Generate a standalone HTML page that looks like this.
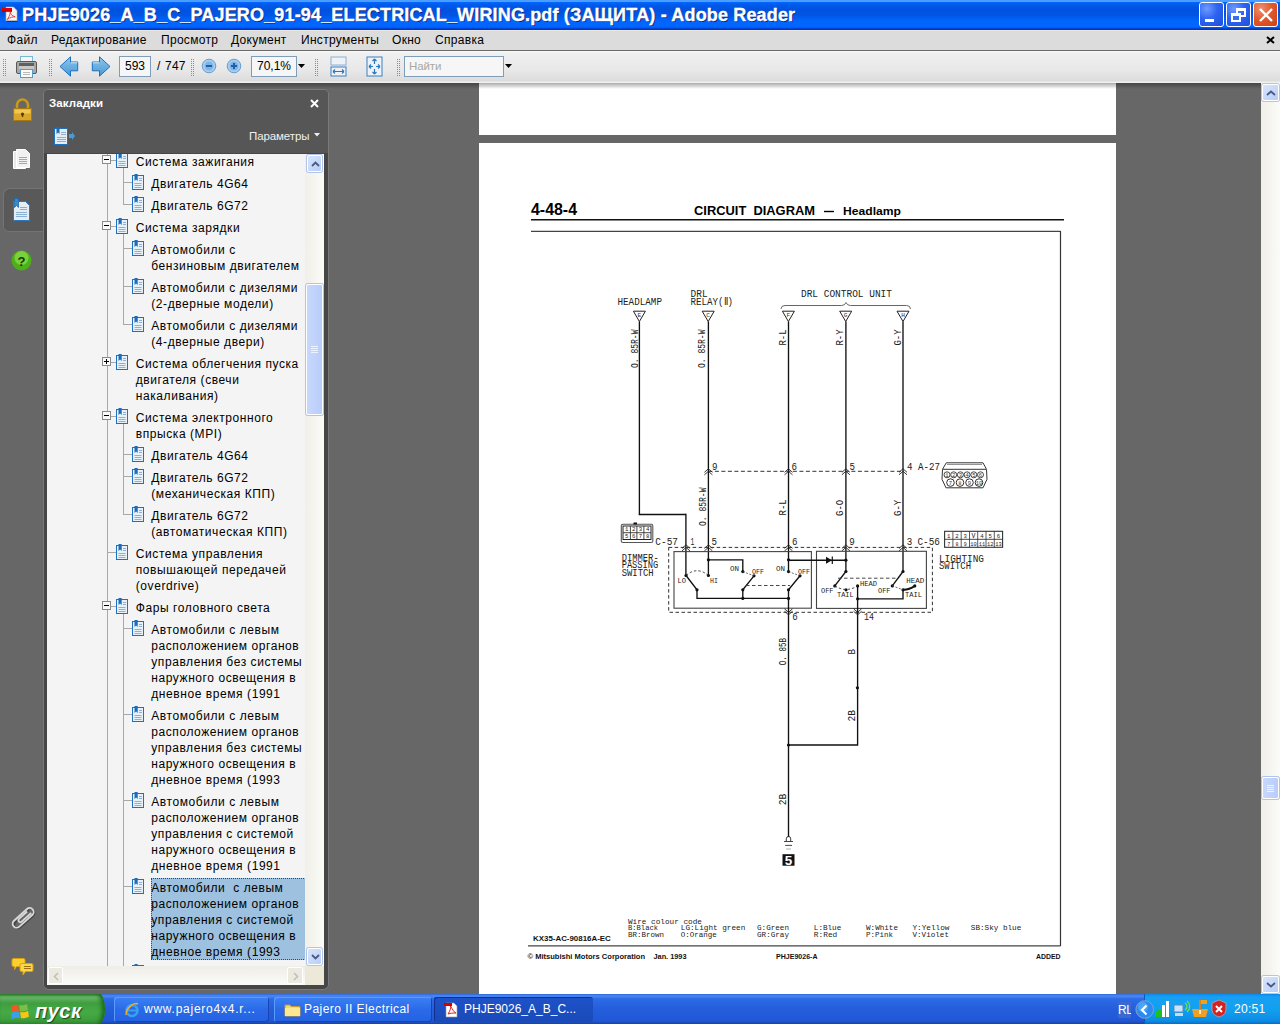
<!DOCTYPE html>
<html><head><meta charset="utf-8">
<style>
*{margin:0;padding:0;box-sizing:border-box}
html,body{width:1280px;height:1024px;overflow:hidden;background:#686868;font-family:"Liberation Sans",sans-serif;position:relative}
.a{position:absolute}
#title{left:0;top:0;width:1280px;height:30px;background:linear-gradient(#4d9cff 0,#4d9cff 1.5px,#0068ff 2.2px,#005ae8 5px,#0052df 10px,#0056e4 15px,#0066ff 21px,#0066ff 27px,#0040d0 28.6px,#0030c0 30px)}
#title .t{left:22px;top:5px;color:#fff;font-weight:bold;font-size:18px;white-space:nowrap;text-shadow:1px 1px 0 #0a1e78;letter-spacing:0.16px;-webkit-text-stroke:0.35px #fff}
.wb{top:2px;width:25px;height:25px;border:1px solid #fff;border-radius:3px;background:radial-gradient(circle at 30% 25%,#6e9cff 0%,#2d64f0 45%,#1f4fd8 100%)}
#menu{left:0;top:30px;width:1280px;height:21px;background:linear-gradient(#ebe7e2 0,#ebe7e2 1px,#dcdcdc 1.5px,#dcdcdc 19.5px,#6a6a6a 20px,#6a6a6a 21px)}
#menu span{position:absolute;top:3px;font-size:12px;color:#000;letter-spacing:0.3px}
#tb{left:0;top:51px;width:1280px;height:32px;background:linear-gradient(#fafafa 0,#f0f0f0 2px,#e8e8e8 60%,#dcdcdc 30px,#f0f0f0 31px)}
.grip{width:3px;height:17px;top:8px;background-image:repeating-linear-gradient(#8c8c8c 0 1px,transparent 1px 2px),repeating-linear-gradient(#8c8c8c 0 1px,transparent 1px 2px);background-size:1px 17px,1px 17px;background-position:0 0,2px 0;background-repeat:no-repeat}
.inp{background:#f6f6f6;border:1px solid #7f9db9;height:21px;font-size:12px;color:#000;line-height:19px;text-align:center}
#main{left:0;top:83px;width:1280px;height:911px;background:#676767;overflow:hidden}
#panel{left:43px;top:6px;width:286px;height:901px;background:#565656;border-radius:5px 5px 6px 6px;box-shadow:inset 0 0 0 1px #7a7a7a}
#pframe{left:1px;top:64px;width:284px;height:836px;background:#464646;border-radius:0 0 5px 5px}
#tree{left:4px;top:65px;width:277px;height:831px;background:#f4f4f4;overflow:hidden;font-size:12px;color:#000}
#tree .tx{line-height:16px;white-space:nowrap;letter-spacing:0.57px}
#tree .tx.sel{background:#9dc1de;outline:1px dotted #6a3a1a;outline-offset:-1px;width:155px;height:82px;padding-top:2px;top:724px !important}
#tree .vl{width:1px;background:#a8a8a8}
#tree .hl{height:1px;background:#a8a8a8}
#tree .ex{width:9px;height:9px;border:1px solid #8a8a8a;background:#fafafa}
#tree .ex i{position:absolute;left:1px;top:3px;width:5px;height:1px;background:#000}
#tree .ex b{position:absolute;left:3px;top:1px;width:1px;height:5px;background:#000}
.sbv{background:linear-gradient(90deg,#f0efe8,#fbfbf8)}
.sbtn{width:16px;height:17px;border:1px solid #fff;border-radius:2px;background:linear-gradient(135deg,#d8e4fc,#b8cef8);box-shadow:0 0 0 1px #b0c4ec}
#task{left:0;top:994px;width:1280px;height:30px;background:linear-gradient(#3168d5 0px,#4a8af5 2px,#2c6ae6 5px,#245edb 50%,#2157d6 90%,#1941a5 100%)}
.tbtn{top:3px;height:25px;border-radius:3px;background:linear-gradient(#3c81f3,#2a6ae8 50%,#2461e0);box-shadow:inset 1px 1px 0 #5a9aff,inset -1px -1px 0 #1a44b0;color:#fff;font-size:12px;line-height:25px;white-space:nowrap;overflow:hidden}
</style></head><body>
<svg width="0" height="0" style="position:absolute">
 <defs>
  <symbol id="bk" viewBox="0 0 13 16"><rect x="0.5" y="1.5" width="11" height="14" fill="#e8f0f8" stroke="#1e70c0"/><path d="M2.5 0h3.2v7l-1.6-1.6-1.6 1.6z" fill="#1e6cb8"/><path d="M7 4.5h3M7 6.5h3M2.5 9.5h7M2.5 11.5h7M2.5 13.5h7" stroke="#8fb0d4" stroke-width="1"/></symbol>
 </defs>
</svg>
<div id="title" class="a">
  <svg class="a" style="left:2px;top:6px" width="17" height="17" viewBox="0 0 17 17"><path d="M4 1h7.5l3.5 3.5V15H4z" fill="#f4f4f4" stroke="#b0b0b0" stroke-width="0.6"/><path d="M4.3 15.3h10.9" stroke="#202040" stroke-width="1"/><rect x="0" y="2" width="10" height="3.5" fill="#e00000"/><rect x="0" y="4.8" width="10" height="0.8" fill="#900000"/><path d="M5 13.5c1.5-1.5 3-4 3.3-7.5 0.4 2 1.5 4 4.8 4.8-2 0-4.5 0.3-8 2.7z" fill="none" stroke="#f03030" stroke-width="0.9"/></svg>
  <div class="a t">PHJE9026_A_B_C_PAJERO_91-94_ELECTRICAL_WIRING.pdf (ЗАЩИТА) - Adobe Reader</div>
  <div class="a wb" style="left:1199px"><div class="a" style="left:5px;top:16px;width:9px;height:3px;background:#fff"></div></div>
  <div class="a wb" style="left:1226px"><div class="a" style="left:9px;top:5px;width:10px;height:9px;border:2px solid #fff;border-top-width:3px"></div><div class="a" style="left:4px;top:10px;width:10px;height:9px;border:2px solid #fff;border-top-width:3px;background:#3a6cf0"></div></div>
  <div class="a wb" style="left:1253px;background:radial-gradient(circle at 30% 25%,#f09070 0%,#e05a30 45%,#d04010 100%)"><svg class="a" style="left:4px;top:4px" width="16" height="16"><path d="M2 2L14 14M14 2L2 14" stroke="#fff" stroke-width="2.4"/></svg></div>
</div>
<div id="menu" class="a">
  <span style="left:7px">Файл</span>
  <span style="left:51px">Редактирование</span>
  <span style="left:161px">Просмотр</span>
  <span style="left:231px">Документ</span>
  <span style="left:301px">Инструменты</span>
  <span style="left:392px">Окно</span>
  <span style="left:435px">Справка</span>
  <svg class="a" style="left:1266px;top:6px" width="9" height="8"><path d="M1 1L8 7M8 1L1 7" stroke="#000" stroke-width="2"/></svg>
</div>
<div id="tb" class="a">
  <div class="a grip" style="left:3px"></div>
  <svg class="a" style="left:16px;top:5px" width="22" height="23" viewBox="0 0 22 23"><rect x="4.5" y="0.5" width="12" height="7" fill="#f6f6f6" stroke="#7ab8d8"/><rect x="0.5" y="5.5" width="20" height="12" rx="1.5" fill="#a8a8a8" stroke="#585858"/><rect x="3" y="7" width="15" height="3" fill="#606060"/><rect x="3" y="10" width="15" height="3" fill="#c8c8c8"/><rect x="4.5" y="13.5" width="12" height="8" fill="#fafafa" stroke="#5a9ac8"/><path d="M7 16.5h7M7 18.5h7" stroke="#b8b8b8"/></svg>
  <div class="a grip" style="left:49px"></div>
  <svg class="a" style="left:59px;top:5px" width="20" height="21" viewBox="0 0 20 21"><defs><linearGradient id="ag" x1="0" y1="0" x2="0" y2="1"><stop offset="0" stop-color="#8cc6ec"/><stop offset="1" stop-color="#4a98d4"/></linearGradient></defs><path d="M1 10.5L11.5 0.8v5.2h7.2v8.8h-7.2v5.4z" fill="url(#ag)" stroke="#1a70c0" stroke-width="1"/><path d="M11.8 6.8h6.5" stroke="#c8e8fc" stroke-width="1"/></svg>
  <svg class="a" style="left:91px;top:5px" width="20" height="21" viewBox="0 0 20 21"><path d="M19 10.5L8.5 0.8v5.2H1.3v8.8h7.2v5.4z" fill="url(#ag)" stroke="#1a70c0" stroke-width="1"/><path d="M1.7 6.8h6.5" stroke="#c8e8fc" stroke-width="1"/></svg>
  <div class="a inp" style="left:119px;top:5px;width:32px">593</div>
  <div class="a" style="left:157px;top:8px;font-size:12px;color:#000;letter-spacing:0.2px;word-spacing:1px">/ 747</div>
  <div class="a grip" style="left:191px"></div>
  <svg class="a" style="left:201px;top:7px" width="16" height="16" viewBox="0 0 16 16"><circle cx="8" cy="8" r="6.8" fill="#a8cdf0" stroke="#6a9cc8"/><circle cx="8" cy="8" r="4.5" fill="#7fb4e6"/><rect x="5" y="7" width="6" height="2" fill="#1f5ea8"/></svg>
  <svg class="a" style="left:226px;top:7px" width="16" height="16" viewBox="0 0 16 16"><circle cx="8" cy="8" r="6.8" fill="#a8cdf0" stroke="#6a9cc8"/><circle cx="8" cy="8" r="4.5" fill="#7fb4e6"/><rect x="5" y="7" width="6" height="2" fill="#1f5ea8"/><rect x="7" y="5" width="2" height="6" fill="#1f5ea8"/></svg>
  <div class="a inp" style="left:251px;top:5px;width:46px">70,1%</div>
  <svg class="a" style="left:298px;top:13px" width="7" height="5"><path d="M0 0h7L3.5 4z" fill="#000"/></svg>
  <div class="a grip" style="left:315px"></div>
  <svg class="a" style="left:330px;top:5px" width="17" height="21" viewBox="0 0 17 21"><rect x="1" y="1" width="15" height="8" fill="#eef2f6" stroke="#8ab0d0"/><rect x="1" y="11" width="15" height="9" fill="#eef2f6" stroke="#3a80c0"/><path d="M3 15.5h11M3 15.5l2-2M3 15.5l2 2M14 15.5l-2-2M14 15.5l-2 2" stroke="#2a78c0" stroke-width="1.2" fill="none"/></svg>
  <svg class="a" style="left:366px;top:5px" width="17" height="21" viewBox="0 0 17 21"><rect x="1" y="1" width="15" height="19" fill="#eef2f6" stroke="#3a80c0"/><path d="M8.5 3v5M8.5 3l-2 2M8.5 3l2 2M8.5 18v-5M8.5 18l-2-2M8.5 18l2-2M3 10.5h4M3 10.5l2-2M3 10.5l2 2M14 10.5h-4M14 10.5l-2-2M14 10.5l-2 2" stroke="#2a78c0" stroke-width="1.2" fill="none"/></svg>
  <div class="a grip" style="left:397px"></div>
  <div class="a inp" style="left:404px;top:5px;width:100px;text-align:left;padding-left:4px;color:#a8a8a0;font-size:11.5px;letter-spacing:-0.1px">Найти</div>
  <svg class="a" style="left:505px;top:13px" width="7" height="5"><path d="M0 0h7L3.5 4z" fill="#000"/></svg>
</div>
<div id="main" class="a">
  <!-- left strip icons -->
  <svg class="a" style="left:12px;top:15px" width="21" height="24" viewBox="0 0 21 24"><path d="M5 11V7a5.5 5.5 0 0 1 11 0v4" fill="none" stroke="#c89a1c" stroke-width="2.6"/><rect x="1.5" y="10.5" width="18" height="12" fill="#d8a628" stroke="#a87a10"/><rect x="2.5" y="11.5" width="16" height="4" fill="#f0c850"/><circle cx="10.5" cy="16" r="1.6" fill="#5a3a00"/><rect x="9.8" y="16" width="1.4" height="3" fill="#5a3a00"/></svg>
  <svg class="a" style="left:12px;top:65px" width="20" height="23" viewBox="0 0 20 23"><path d="M1.5 3.5h12v17h-12z" fill="#e8e8e8" stroke="#fff"/><path d="M4.5 1.5h9l4 4v14h-13z" fill="#f2f2f2" stroke="#fff"/><path d="M7 9.5h8M7 11.5h8M7 13.5h8M7 15.5h8" stroke="#a8a8a8"/></svg>
  <div class="a" style="left:3px;top:105px;width:42px;height:44px;background:#595959;border-radius:6px 0 0 6px;box-shadow:inset 1px 1px 0 #747474,inset 0 -1px 0 #747474"></div>
  <svg class="a" style="left:12px;top:115px" width="20" height="24" viewBox="0 0 20 24"><path d="M1.5 3.5h12l4 4v15h-16z" fill="#e4ecf4" stroke="#2a78c0"/><path d="M2.5 0.5h4v9l-2-2-2 2z" fill="#3a88c8" stroke="#1a68b0" stroke-width="0.8"/><path d="M8 9.5h7M8 11.5h7M4 14.5h11M4 16.5h11M4 18.5h11" stroke="#8ab0d4"/></svg>
  <svg class="a" style="left:11px;top:167px" width="21" height="21" viewBox="0 0 21 21"><circle cx="10.5" cy="10.5" r="10" fill="#4cb018"/><circle cx="10.5" cy="8" r="7" fill="#8ee048" opacity="0.7"/><text x="10.5" y="15.5" font-family="Liberation Sans" font-weight="bold" font-size="13" text-anchor="middle" fill="#103808">?</text></svg>
  <svg class="a" style="left:10px;top:822px" width="26" height="26" viewBox="0 0 26 26"><g transform="translate(13,13) rotate(-42)" fill="none"><path d="M9,-3.2 h-18 a3.6,3.6 0 0 0 0,7.2 h17 a4.3,4.3 0 0 0 0,-8.6" stroke="#303030" stroke-width="2" transform="translate(0.8,1.2)" opacity="0.6"/><path d="M10,4 h-18.5 a4,4 0 0 1 0,-8 h17.5 a4,4 0 0 1 0,8 M9.5,1.8 h-13 a1.9,1.9 0 0 1 0,-3.8 h11" stroke="#d8d8d8" stroke-width="1.8"/></g></svg>
  <svg class="a" style="left:11px;top:874px" width="24" height="20" viewBox="0 0 24 20"><path d="M2.5 1.5h10a1.5 1.5 0 0 1 1.5 1.5v5a1.5 1.5 0 0 1-1.5 1.5h-7l-2 3v-3h-1a1.5 1.5 0 0 1-1.5-1.5v-5a1.5 1.5 0 0 1 1.5-1.5z" fill="#f8d030" stroke="#d8a010"/><path d="M10.5 6.5h10a1.5 1.5 0 0 1 1.5 1.5v5a1.5 1.5 0 0 1-1.5 1.5h-6l-2.5 3.5v-3.5h-1.5a1.5 1.5 0 0 1-1.5-1.5v-5a1.5 1.5 0 0 1 1.5-1.5z" fill="#fad840" stroke="#d8a010"/><path d="M13 9.5h7M13 11.5h7" stroke="#a07010"/></svg>
  <!-- panel -->
  <div id="panel" class="a">
    <div class="a" style="left:6px;top:8px;color:#fff;font-weight:bold;font-size:11.5px;letter-spacing:0.1px">Закладки</div>
    <svg class="a" style="left:267px;top:10px" width="9" height="9"><path d="M1 1L8 8M8 1L1 8" stroke="#fff" stroke-width="2"/></svg>
    <svg class="a" style="left:11px;top:38px" width="22" height="18" viewBox="0 0 22 18"><rect x="0.5" y="1.5" width="13" height="16" fill="#e4ecf4" stroke="#1e70c0"/><path d="M2.5 0h3v7l-1.5-1.5L2.5 7z" fill="#1e6cb8"/><path d="M7 5.5h5M7 7.5h5M3 10.5h9M3 12.5h9M3 14.5h9" stroke="#8fb0d4"/><path d="M15 7h3V5l3 4-3 4v-2h-3z" fill="#4a9ad8"/></svg>
    <div class="a" style="left:206px;top:41px;color:#f0f0f0;font-size:11.5px;letter-spacing:-0.1px">Параметры</div>
    <svg class="a" style="left:271px;top:44px" width="7" height="4"><path d="M0 0h6L3 3.5z" fill="#f0f0f0"/></svg>
    <div id="pframe" class="a"></div>
    <div id="tree" class="a">
<div class="a vl" style="left:60px;top:0px;height:812px"></div>
<div class="a vl" style="left:76px;top:14px;height:37px"></div>
<div class="a vl" style="left:76px;top:80px;height:91px"></div>
<div class="a vl" style="left:76px;top:270px;height:91px"></div>
<div class="a vl" style="left:76px;top:460px;height:352px"></div>
<div class="a hl" style="left:61px;top:6px;width:8px"></div>
<div class="a ex" style="left:55px;top:1px"><i></i></div>
<svg class="a" style="left:69px;top:-2px" width="13" height="16"><use href="#bk"/></svg>
<div class="a tx" style="left:88.8px;top:0px">Система зажигания</div>
<div class="a hl" style="left:77px;top:28px;width:8px"></div>
<svg class="a" style="left:85px;top:20px" width="13" height="16"><use href="#bk"/></svg>
<div class="a tx" style="left:104.3px;top:22px">Двигатель 4G64</div>
<div class="a hl" style="left:77px;top:50px;width:8px"></div>
<svg class="a" style="left:85px;top:42px" width="13" height="16"><use href="#bk"/></svg>
<div class="a tx" style="left:104.3px;top:44px">Двигатель 6G72</div>
<div class="a hl" style="left:61px;top:72px;width:8px"></div>
<div class="a ex" style="left:55px;top:67px"><i></i></div>
<svg class="a" style="left:69px;top:64px" width="13" height="16"><use href="#bk"/></svg>
<div class="a tx" style="left:88.8px;top:66px">Система зарядки</div>
<div class="a hl" style="left:77px;top:94px;width:8px"></div>
<svg class="a" style="left:85px;top:86px" width="13" height="16"><use href="#bk"/></svg>
<div class="a tx" style="left:104.3px;top:88px">Автомобили с<br>бензиновым двигателем</div>
<div class="a hl" style="left:77px;top:132px;width:8px"></div>
<svg class="a" style="left:85px;top:124px" width="13" height="16"><use href="#bk"/></svg>
<div class="a tx" style="left:104.3px;top:126px">Автомобили с дизелями<br>(2-дверные модели)</div>
<div class="a hl" style="left:77px;top:170px;width:8px"></div>
<svg class="a" style="left:85px;top:162px" width="13" height="16"><use href="#bk"/></svg>
<div class="a tx" style="left:104.3px;top:164px">Автомобили с дизелями<br>(4-дверные двери)</div>
<div class="a hl" style="left:61px;top:208px;width:8px"></div>
<div class="a ex" style="left:55px;top:203px"><i></i><b></b></div>
<svg class="a" style="left:69px;top:200px" width="13" height="16"><use href="#bk"/></svg>
<div class="a tx" style="left:88.8px;top:202px">Система облегчения пуска<br>двигателя (свечи<br>накаливания)</div>
<div class="a hl" style="left:61px;top:262px;width:8px"></div>
<div class="a ex" style="left:55px;top:257px"><i></i></div>
<svg class="a" style="left:69px;top:254px" width="13" height="16"><use href="#bk"/></svg>
<div class="a tx" style="left:88.8px;top:256px">Система электронного<br>впрыска (MPI)</div>
<div class="a hl" style="left:77px;top:300px;width:8px"></div>
<svg class="a" style="left:85px;top:292px" width="13" height="16"><use href="#bk"/></svg>
<div class="a tx" style="left:104.3px;top:294px">Двигатель 4G64</div>
<div class="a hl" style="left:77px;top:322px;width:8px"></div>
<svg class="a" style="left:85px;top:314px" width="13" height="16"><use href="#bk"/></svg>
<div class="a tx" style="left:104.3px;top:316px">Двигатель 6G72<br>(механическая КПП)</div>
<div class="a hl" style="left:77px;top:360px;width:8px"></div>
<svg class="a" style="left:85px;top:352px" width="13" height="16"><use href="#bk"/></svg>
<div class="a tx" style="left:104.3px;top:354px">Двигатель 6G72<br>(автоматическая КПП)</div>
<div class="a hl" style="left:61px;top:398px;width:8px"></div>
<svg class="a" style="left:69px;top:390px" width="13" height="16"><use href="#bk"/></svg>
<div class="a tx" style="left:88.8px;top:392px">Система управления<br>повышающей передачей<br>(overdrive)</div>
<div class="a hl" style="left:61px;top:452px;width:8px"></div>
<div class="a ex" style="left:55px;top:447px"><i></i></div>
<svg class="a" style="left:69px;top:444px" width="13" height="16"><use href="#bk"/></svg>
<div class="a tx" style="left:88.8px;top:446px">Фары головного света</div>
<div class="a hl" style="left:77px;top:474px;width:8px"></div>
<svg class="a" style="left:85px;top:466px" width="13" height="16"><use href="#bk"/></svg>
<div class="a tx" style="left:104.3px;top:468px">Автомобили с левым<br>расположением органов<br>управления без системы<br>наружного освещения в<br>дневное время (1991</div>
<div class="a hl" style="left:77px;top:560px;width:8px"></div>
<svg class="a" style="left:85px;top:552px" width="13" height="16"><use href="#bk"/></svg>
<div class="a tx" style="left:104.3px;top:554px">Автомобили с левым<br>расположением органов<br>управления без системы<br>наружного освещения в<br>дневное время (1993</div>
<div class="a hl" style="left:77px;top:646px;width:8px"></div>
<svg class="a" style="left:85px;top:638px" width="13" height="16"><use href="#bk"/></svg>
<div class="a tx" style="left:104.3px;top:640px">Автомобили с левым<br>расположением органов<br>управления с системой<br>наружного освещения в<br>дневное время (1991</div>
<div class="a hl" style="left:77px;top:732px;width:8px"></div>
<svg class="a" style="left:85px;top:724px" width="13" height="16"><use href="#bk"/></svg>
<div class="a tx sel" style="left:104.3px;top:726px">Автомобили&nbsp; с левым<br>расположением органов<br>управления с системой<br>наружного освещения в<br>дневное время (1993</div>
<div class="a hl" style="left:77px;top:818px;width:8px"></div>
<svg class="a" style="left:85px;top:810px" width="13" height="16"><use href="#bk"/></svg>
    </div>
    <!-- tree v scrollbar -->
    <div class="a sbv" style="left:262px;top:65px;width:19px;height:812px"></div>
    <div class="a sbtn" style="left:264px;top:66px;width:15px;height:17px"><svg class="a" style="left:3px;top:5px" width="9" height="6"><path d="M1 5L4.5 1.5L8 5" stroke="#4a5a80" stroke-width="1.8" fill="none"/></svg></div>
    <div class="a sbtn" style="left:263px;top:195px;width:17px;height:131px;background:linear-gradient(90deg,#c8d8fc,#b8cdfa)"><svg class="a" style="left:4px;top:61px" width="8" height="7"><path d="M0 0.5h7M0 2.5h7M0 4.5h7M0 6.5h7" stroke="#eef4ff"/></svg></div>
    <div class="a sbtn" style="left:264px;top:859px;width:15px;height:17px"><svg class="a" style="left:3px;top:5px" width="9" height="6"><path d="M1 1L4.5 4.5L8 1" stroke="#4a5a80" stroke-width="1.8" fill="none"/></svg></div>
    <!-- tree h scrollbar -->
    <div class="a" style="left:4px;top:877px;width:277px;height:19px;background:linear-gradient(#eeede6,#fbfbf8)"></div>
    <div class="a" style="left:5px;top:878px;width:15px;height:17px;border:1px solid #fff;background:#eceae0;border-radius:2px"><svg class="a" style="left:4px;top:4px" width="6" height="9"><path d="M5 1L1.5 4.5L5 8" stroke="#c0c0b8" stroke-width="1.6" fill="none"/></svg></div>
    <div class="a" style="left:244px;top:878px;width:16px;height:17px;border:1px solid #fff;background:#eceae0;border-radius:2px"><svg class="a" style="left:5px;top:4px" width="6" height="9"><path d="M1 1L4.5 4.5L1 8" stroke="#c0c0b8" stroke-width="1.6" fill="none"/></svg></div>
    <div class="a" style="left:262px;top:877px;width:19px;height:19px;background:#ece9d8"></div>
  </div>
  <!-- pages -->
  <div class="a" style="left:479px;top:0;width:637px;height:52px;background:#fff"></div>
  <div class="a" style="left:479px;top:60px;width:637px;height:860px;background:#fff">
<svg class="a" style="left:0;top:0" width="637" height="851" viewBox="479 143 637 851" font-family="Liberation Sans, sans-serif">
<text x="531.0" y="215.0" font-size="16.5" fill="#000" textLength="46.0" lengthAdjust="spacingAndGlyphs" font-weight="bold">4-48-4</text>
<text x="694.0" y="215.0" font-size="13.6" fill="#000" textLength="121.0" lengthAdjust="spacingAndGlyphs" font-weight="bold">CIRCUIT&#160; DIAGRAM</text>
<line x1="824.0" y1="211.5" x2="834.0" y2="211.5" stroke="#000" stroke-width="1.40"/>
<text x="843.0" y="215.0" font-size="11.8" fill="#000" textLength="58.0" lengthAdjust="spacingAndGlyphs" font-weight="bold">Headlamp</text>
<line x1="531.0" y1="219.8" x2="1064.0" y2="219.8" stroke="#111" stroke-width="1.60"/>
<line x1="531.0" y1="231.3" x2="1060.5" y2="231.3" stroke="#444" stroke-width="1.20"/>
<line x1="1060.5" y1="231.0" x2="1060.5" y2="946.0" stroke="#333" stroke-width="1.20"/>
<line x1="528.0" y1="945.8" x2="1060.5" y2="945.8" stroke="#444" stroke-width="1.20"/>
<text x="617.5" y="305.0" font-size="11.4" fill="#222" textLength="44.5" lengthAdjust="spacingAndGlyphs" font-family="Liberation Mono, monospace">HEADLAMP</text>
<text x="690.6" y="297.0" font-size="11.4" fill="#222" textLength="17.0" lengthAdjust="spacingAndGlyphs" font-family="Liberation Mono, monospace">DRL</text>
<text x="690.6" y="305.0" font-size="11.4" fill="#222" textLength="42.5" lengthAdjust="spacingAndGlyphs" font-family="Liberation Mono, monospace">RELAY(&#8545;)</text>
<text x="801.0" y="297.0" font-size="11.4" fill="#222" textLength="91.0" lengthAdjust="spacingAndGlyphs" font-family="Liberation Mono, monospace">DRL CONTROL UNIT</text>
<path d="M781,309 q0,-3.5 4,-3.5 h56.5 q3.5,0 4.5,-3 q1,3 4.5,3 h56 q4,0 4,3.5" fill="none" stroke="#666" stroke-width="1"/>
<path d="M633.4,311.2 h12 l-6,10.3 z" fill="#fff" stroke="#222" stroke-width="1"/>
<text x="639.4" y="317.2" font-size="6.2" fill="#333" text-anchor="middle" font-family="Liberation Mono, monospace">E</text>
<path d="M702.2,311.2 h12 l-6,10.3 z" fill="#fff" stroke="#222" stroke-width="1"/>
<text x="708.2" y="317.2" font-size="6.2" fill="#333" text-anchor="middle" font-family="Liberation Mono, monospace">C</text>
<path d="M782.4,311.2 h12 l-6,10.3 z" fill="#fff" stroke="#222" stroke-width="1"/>
<text x="788.4" y="317.2" font-size="6.2" fill="#333" text-anchor="middle" font-family="Liberation Mono, monospace">F</text>
<path d="M839.7,311.2 h12 l-6,10.3 z" fill="#fff" stroke="#222" stroke-width="1"/>
<text x="845.7" y="317.2" font-size="6.2" fill="#333" text-anchor="middle" font-family="Liberation Mono, monospace">G</text>
<path d="M897.0,311.2 h12 l-6,10.3 z" fill="#fff" stroke="#222" stroke-width="1"/>
<text x="903.0" y="317.2" font-size="6.2" fill="#333" text-anchor="middle" font-family="Liberation Mono, monospace">H</text>
<line x1="639.4" y1="321.5" x2="639.4" y2="514.5" stroke="#111" stroke-width="1.35"/>
<line x1="638.7" y1="514.5" x2="686.0" y2="514.5" stroke="#111" stroke-width="1.35"/>
<line x1="685.9" y1="513.8" x2="685.9" y2="575.5" stroke="#111" stroke-width="1.35"/>
<line x1="708.4" y1="321.5" x2="708.4" y2="575.5" stroke="#111" stroke-width="1.35"/>
<line x1="788.5" y1="321.5" x2="788.5" y2="571.6" stroke="#111" stroke-width="1.35"/>
<line x1="845.9" y1="321.5" x2="845.9" y2="571.5" stroke="#111" stroke-width="1.35"/>
<line x1="903.0" y1="321.5" x2="903.0" y2="571.5" stroke="#111" stroke-width="1.35"/>
<line x1="708.4" y1="471.3" x2="903.0" y2="471.3" stroke="#333" stroke-width="1.00" stroke-dasharray="4,2.5"/>
<path d="M704.4,472.3 l4,-3.5 l4,3.5 M704.4,474.8 l4,-3.5 l4,3.5" fill="none" stroke="#222" stroke-width="0.9"/>
<path d="M784.5,472.3 l4,-3.5 l4,3.5 M784.5,474.8 l4,-3.5 l4,3.5" fill="none" stroke="#222" stroke-width="0.9"/>
<path d="M841.9,472.3 l4,-3.5 l4,3.5 M841.9,474.8 l4,-3.5 l4,3.5" fill="none" stroke="#222" stroke-width="0.9"/>
<path d="M899.0,472.3 l4,-3.5 l4,3.5 M899.0,474.8 l4,-3.5 l4,3.5" fill="none" stroke="#222" stroke-width="0.9"/>
<text x="712.0" y="469.6" font-size="10.5" fill="#222" textLength="5.5" lengthAdjust="spacingAndGlyphs" font-family="Liberation Mono, monospace">9</text>
<text x="791.5" y="469.6" font-size="10.5" fill="#222" textLength="5.5" lengthAdjust="spacingAndGlyphs" font-family="Liberation Mono, monospace">6</text>
<text x="849.5" y="469.6" font-size="10.5" fill="#222" textLength="5.5" lengthAdjust="spacingAndGlyphs" font-family="Liberation Mono, monospace">5</text>
<text x="907.0" y="469.8" font-size="10.5" fill="#222" textLength="33.0" lengthAdjust="spacingAndGlyphs" font-family="Liberation Mono, monospace">4 A-27</text>
<text transform="translate(637.6,368.0) rotate(-90)" font-size="11.4" fill="#222" textLength="38.5" lengthAdjust="spacingAndGlyphs" font-family="Liberation Mono, monospace">O. 85R-W</text>
<text transform="translate(705.4,368.0) rotate(-90)" font-size="11.4" fill="#222" textLength="38.5" lengthAdjust="spacingAndGlyphs" font-family="Liberation Mono, monospace">O. 85R-W</text>
<text transform="translate(786.0,345.6) rotate(-90)" font-size="11.4" fill="#222" textLength="16.2" lengthAdjust="spacingAndGlyphs" font-family="Liberation Mono, monospace">R-L</text>
<text transform="translate(843.2,345.6) rotate(-90)" font-size="11.4" fill="#222" textLength="16.2" lengthAdjust="spacingAndGlyphs" font-family="Liberation Mono, monospace">R-Y</text>
<text transform="translate(901.0,345.6) rotate(-90)" font-size="11.4" fill="#222" textLength="16.2" lengthAdjust="spacingAndGlyphs" font-family="Liberation Mono, monospace">G-Y</text>
<text transform="translate(706.2,526.0) rotate(-90)" font-size="11.4" fill="#222" textLength="38.5" lengthAdjust="spacingAndGlyphs" font-family="Liberation Mono, monospace">O. 85R-W</text>
<text transform="translate(786.2,515.5) rotate(-90)" font-size="11.4" fill="#222" textLength="16.2" lengthAdjust="spacingAndGlyphs" font-family="Liberation Mono, monospace">R-L</text>
<text transform="translate(843.4,516.0) rotate(-90)" font-size="11.4" fill="#222" textLength="16.2" lengthAdjust="spacingAndGlyphs" font-family="Liberation Mono, monospace">G-O</text>
<text transform="translate(900.6,516.0) rotate(-90)" font-size="11.4" fill="#222" textLength="16.2" lengthAdjust="spacingAndGlyphs" font-family="Liberation Mono, monospace">G-Y</text>
<text transform="translate(786.2,665.2) rotate(-90)" font-size="11.4" fill="#222" textLength="27.2" lengthAdjust="spacingAndGlyphs" font-family="Liberation Mono, monospace">O. 85B</text>
<text transform="translate(855.2,654.5) rotate(-90)" font-size="11.4" fill="#222" textLength="5.5" lengthAdjust="spacingAndGlyphs" font-family="Liberation Mono, monospace">B</text>
<text transform="translate(855.2,721.5) rotate(-90)" font-size="11.4" fill="#222" textLength="11.5" lengthAdjust="spacingAndGlyphs" font-family="Liberation Mono, monospace">2B</text>
<text transform="translate(786.2,805.3) rotate(-90)" font-size="11.4" fill="#222" textLength="11.5" lengthAdjust="spacingAndGlyphs" font-family="Liberation Mono, monospace">2B</text>
<path d="M946.3,462.8 h36.7 l3.5,6.5 l0.5,10 l-4,8.5 h-37 l-4,-8.5 l0.5,-10 z" fill="#fff" stroke="#333" stroke-width="1"/>
<line x1="943.0" y1="469.3" x2="986.0" y2="469.3" stroke="#333" stroke-width="1.00"/>
<line x1="947.0" y1="464.5" x2="982.0" y2="464.5" stroke="#777" stroke-width="0.80"/>
<circle cx="947.0" cy="474.8" r="3" fill="#fff" stroke="#333" stroke-width="0.9"/>
<text x="947.0" y="476.8" font-size="5.5" fill="#333" text-anchor="middle" font-family="Liberation Mono, monospace">1</text>
<circle cx="953.7" cy="474.8" r="3" fill="#fff" stroke="#333" stroke-width="0.9"/>
<text x="953.7" y="476.8" font-size="5.5" fill="#333" text-anchor="middle" font-family="Liberation Mono, monospace">2</text>
<circle cx="960.4" cy="474.8" r="3" fill="#fff" stroke="#333" stroke-width="0.9"/>
<text x="960.4" y="476.8" font-size="5.5" fill="#333" text-anchor="middle" font-family="Liberation Mono, monospace">3</text>
<circle cx="967.1" cy="474.8" r="3" fill="#fff" stroke="#333" stroke-width="0.9"/>
<text x="967.1" y="476.8" font-size="5.5" fill="#333" text-anchor="middle" font-family="Liberation Mono, monospace">4</text>
<circle cx="973.8" cy="474.8" r="3" fill="#fff" stroke="#333" stroke-width="0.9"/>
<text x="973.8" y="476.8" font-size="5.5" fill="#333" text-anchor="middle" font-family="Liberation Mono, monospace">5</text>
<circle cx="980.5" cy="474.8" r="3" fill="#fff" stroke="#333" stroke-width="0.9"/>
<text x="980.5" y="476.8" font-size="5.5" fill="#333" text-anchor="middle" font-family="Liberation Mono, monospace">6</text>
<circle cx="950.5" cy="482.6" r="3.8" fill="#fff" stroke="#333" stroke-width="1"/>
<text x="950.5" y="484.6" font-size="5.5" fill="#333" text-anchor="middle" font-family="Liberation Mono, monospace">7</text>
<circle cx="960.0" cy="482.6" r="3.8" fill="#fff" stroke="#333" stroke-width="1"/>
<text x="960.0" y="484.6" font-size="5.5" fill="#333" text-anchor="middle" font-family="Liberation Mono, monospace">8</text>
<circle cx="969.5" cy="482.6" r="3.8" fill="#fff" stroke="#333" stroke-width="1"/>
<text x="969.5" y="484.6" font-size="5.5" fill="#333" text-anchor="middle" font-family="Liberation Mono, monospace">9</text>
<circle cx="979.0" cy="482.6" r="3.8" fill="#fff" stroke="#333" stroke-width="1"/>
<text x="979.0" y="484.6" font-size="5.5" fill="#333" text-anchor="middle" font-family="Liberation Mono, monospace">10</text>
<rect x="621.3" y="524.2" width="31.5" height="18.3" rx="1.5" fill="#fff" stroke="#555" stroke-width="1.1"/>
<rect x="623" y="526" width="28" height="13.5" fill="#fff" stroke="#222" stroke-width="1"/>
<rect x="633.5" y="522.5" width="3.5" height="2" fill="#111"/>
<line x1="630.4" y1="526.0" x2="630.4" y2="539.5" stroke="#333" stroke-width="0.90"/>
<line x1="636.9" y1="526.0" x2="636.9" y2="539.5" stroke="#333" stroke-width="0.90"/>
<line x1="643.9" y1="526.0" x2="643.9" y2="539.5" stroke="#333" stroke-width="0.90"/>
<line x1="623.0" y1="532.7" x2="651.0" y2="532.7" stroke="#333" stroke-width="0.90"/>
<text x="626.7" y="531.3" font-size="5.7" fill="#222" text-anchor="middle" font-family="Liberation Mono, monospace">1</text>
<text x="626.7" y="538.3" font-size="5.7" fill="#222" text-anchor="middle" font-family="Liberation Mono, monospace">5</text>
<text x="633.6" y="531.3" font-size="5.7" fill="#222" text-anchor="middle" font-family="Liberation Mono, monospace">2</text>
<text x="633.6" y="538.3" font-size="5.7" fill="#222" text-anchor="middle" font-family="Liberation Mono, monospace">6</text>
<text x="640.4" y="531.3" font-size="5.7" fill="#222" text-anchor="middle" font-family="Liberation Mono, monospace">3</text>
<text x="640.4" y="538.3" font-size="5.7" fill="#222" text-anchor="middle" font-family="Liberation Mono, monospace">7</text>
<text x="647.7" y="531.3" font-size="5.7" fill="#222" text-anchor="middle" font-family="Liberation Mono, monospace">4</text>
<text x="647.7" y="538.3" font-size="5.7" fill="#222" text-anchor="middle" font-family="Liberation Mono, monospace">8</text>
<rect x="944.6" y="531.3" width="58" height="16" fill="#fff" stroke="#333" stroke-width="1.1"/>
<line x1="944.6" y1="539.3" x2="1002.6" y2="539.3" stroke="#333" stroke-width="0.90"/>
<line x1="952.9" y1="531.3" x2="952.9" y2="547.3" stroke="#333" stroke-width="0.80"/>
<line x1="961.2" y1="531.3" x2="961.2" y2="547.3" stroke="#333" stroke-width="0.80"/>
<line x1="969.5" y1="531.3" x2="969.5" y2="547.3" stroke="#333" stroke-width="0.80"/>
<line x1="977.7" y1="531.3" x2="977.7" y2="547.3" stroke="#333" stroke-width="0.80"/>
<line x1="986.0" y1="531.3" x2="986.0" y2="547.3" stroke="#333" stroke-width="0.80"/>
<line x1="994.3" y1="531.3" x2="994.3" y2="547.3" stroke="#333" stroke-width="0.80"/>
<text x="948.7" y="538.0" font-size="5.7" fill="#222" text-anchor="middle" font-family="Liberation Mono, monospace">1</text>
<text x="957.0" y="538.0" font-size="5.7" fill="#222" text-anchor="middle" font-family="Liberation Mono, monospace">2</text>
<text x="965.3" y="538.0" font-size="5.7" fill="#222" text-anchor="middle" font-family="Liberation Mono, monospace">3</text>
<text x="973.6" y="538.0" font-size="6.6" fill="#222" text-anchor="middle" font-family="Liberation Mono, monospace">V</text>
<text x="981.9" y="538.0" font-size="5.7" fill="#222" text-anchor="middle" font-family="Liberation Mono, monospace">4</text>
<text x="990.2" y="538.0" font-size="5.7" fill="#222" text-anchor="middle" font-family="Liberation Mono, monospace">5</text>
<text x="998.5" y="538.0" font-size="5.7" fill="#222" text-anchor="middle" font-family="Liberation Mono, monospace">6</text>
<text x="948.7" y="545.8" font-size="5.7" fill="#222" text-anchor="middle" textLength="3.0" lengthAdjust="spacingAndGlyphs" font-family="Liberation Mono, monospace">7</text>
<text x="957.0" y="545.8" font-size="5.7" fill="#222" text-anchor="middle" textLength="3.0" lengthAdjust="spacingAndGlyphs" font-family="Liberation Mono, monospace">8</text>
<text x="965.3" y="545.8" font-size="5.7" fill="#222" text-anchor="middle" textLength="3.0" lengthAdjust="spacingAndGlyphs" font-family="Liberation Mono, monospace">9</text>
<text x="973.6" y="545.8" font-size="5.7" fill="#222" text-anchor="middle" textLength="6.5" lengthAdjust="spacingAndGlyphs" font-family="Liberation Mono, monospace">10</text>
<text x="981.9" y="545.8" font-size="5.7" fill="#222" text-anchor="middle" textLength="6.5" lengthAdjust="spacingAndGlyphs" font-family="Liberation Mono, monospace">11</text>
<text x="990.2" y="545.8" font-size="5.7" fill="#222" text-anchor="middle" textLength="6.5" lengthAdjust="spacingAndGlyphs" font-family="Liberation Mono, monospace">12</text>
<text x="998.5" y="545.8" font-size="5.7" fill="#222" text-anchor="middle" textLength="6.5" lengthAdjust="spacingAndGlyphs" font-family="Liberation Mono, monospace">13</text>
<text x="655.3" y="544.6" font-size="10.5" fill="#222" textLength="22.7" lengthAdjust="spacingAndGlyphs" font-family="Liberation Mono, monospace">C-57</text>
<text x="690.5" y="545.0" font-size="10.5" fill="#222" textLength="3.8" lengthAdjust="spacingAndGlyphs" font-family="Liberation Mono, monospace">1</text>
<text x="711.6" y="545.0" font-size="10.5" fill="#222" textLength="5.5" lengthAdjust="spacingAndGlyphs" font-family="Liberation Mono, monospace">5</text>
<text x="792.0" y="545.4" font-size="10.5" fill="#222" textLength="5.5" lengthAdjust="spacingAndGlyphs" font-family="Liberation Mono, monospace">6</text>
<text x="849.2" y="545.4" font-size="10.5" fill="#222" textLength="5.5" lengthAdjust="spacingAndGlyphs" font-family="Liberation Mono, monospace">9</text>
<text x="906.7" y="545.4" font-size="10.5" fill="#222" textLength="5.5" lengthAdjust="spacingAndGlyphs" font-family="Liberation Mono, monospace">3</text>
<text x="917.5" y="545.4" font-size="10.5" fill="#222" textLength="22.5" lengthAdjust="spacingAndGlyphs" font-family="Liberation Mono, monospace">C-56</text>
<text x="621.7" y="560.8" font-size="11.4" fill="#222" textLength="37.0" lengthAdjust="spacingAndGlyphs" font-family="Liberation Mono, monospace">DIMMER-</text>
<text x="621.7" y="568.3" font-size="11.4" fill="#222" textLength="36.5" lengthAdjust="spacingAndGlyphs" font-family="Liberation Mono, monospace">PASSING</text>
<text x="621.7" y="575.8" font-size="11.4" fill="#222" textLength="32.0" lengthAdjust="spacingAndGlyphs" font-family="Liberation Mono, monospace">SWITCH</text>
<text x="939.0" y="561.5" font-size="11.4" fill="#222" textLength="45.0" lengthAdjust="spacingAndGlyphs" font-family="Liberation Mono, monospace">LIGHTING</text>
<text x="939.0" y="568.8" font-size="11.4" fill="#222" textLength="32.0" lengthAdjust="spacingAndGlyphs" font-family="Liberation Mono, monospace">SWITCH</text>
<rect x="668.7" y="547.4" width="263.7" height="64.9" fill="none" stroke="#333" stroke-width="1" stroke-dasharray="3.5,2.5"/>
<path d="M682.0,548.4 l4,-3.5 l4,3.5 M682.0,550.9 l4,-3.5 l4,3.5" fill="none" stroke="#222" stroke-width="0.9"/>
<path d="M704.4,548.4 l4,-3.5 l4,3.5 M704.4,550.9 l4,-3.5 l4,3.5" fill="none" stroke="#222" stroke-width="0.9"/>
<path d="M784.5,548.4 l4,-3.5 l4,3.5 M784.5,550.9 l4,-3.5 l4,3.5" fill="none" stroke="#222" stroke-width="0.9"/>
<path d="M841.9,548.4 l4,-3.5 l4,3.5 M841.9,550.9 l4,-3.5 l4,3.5" fill="none" stroke="#222" stroke-width="0.9"/>
<path d="M899.0,548.4 l4,-3.5 l4,3.5 M899.0,550.9 l4,-3.5 l4,3.5" fill="none" stroke="#222" stroke-width="0.9"/>
<rect x="674" y="551.6" width="137.4" height="56.6" fill="none" stroke="#444" stroke-width="1.1"/>
<rect x="816.5" y="551.3" width="109.9" height="57.1" fill="none" stroke="#444" stroke-width="1.1"/>
<polyline points="708.4,559.8 742.8,559.8 742.8,571.6" fill="none" stroke="#111" stroke-width="1.35"/>
<circle cx="708.4" cy="559.8" r="1.6" fill="#111"/>
<circle cx="686.0" cy="575.5" r="1.6" fill="#111"/>
<circle cx="708.4" cy="575.5" r="1.6" fill="#111"/>
<path d="M686,575.5 Q697,566 708.4,575.5" fill="none" stroke="#333" stroke-width="0.9" stroke-dasharray="2.5,2"/>
<polyline points="686.0,575.5 697.0,589.8 697.0,598.4 788.5,598.4" fill="none" stroke="#111" stroke-width="1.35"/>
<circle cx="697.0" cy="589.8" r="1.6" fill="#111"/>
<circle cx="742.8" cy="571.6" r="1.6" fill="#111"/>
<circle cx="754.0" cy="575.8" r="1.6" fill="#111"/>
<circle cx="742.8" cy="589.8" r="1.6" fill="#111"/>
<circle cx="742.8" cy="598.4" r="1.6" fill="#111"/>
<line x1="742.8" y1="571.6" x2="754.0" y2="575.8" stroke="#444" stroke-width="0.80" stroke-dasharray="2,1.5"/>
<polyline points="754.0,575.8 742.8,589.8 742.8,598.4" fill="none" stroke="#111" stroke-width="1.35"/>
<line x1="746.0" y1="585.5" x2="790.0" y2="585.5" stroke="#333" stroke-width="0.90" stroke-dasharray="3.5,2.5"/>
<circle cx="788.5" cy="559.8" r="1.6" fill="#111"/>
<circle cx="788.5" cy="571.6" r="1.6" fill="#111"/>
<circle cx="800.0" cy="575.8" r="1.6" fill="#111"/>
<circle cx="788.5" cy="589.8" r="1.6" fill="#111"/>
<circle cx="788.5" cy="598.4" r="1.6" fill="#111"/>
<line x1="788.5" y1="571.6" x2="800.0" y2="575.8" stroke="#444" stroke-width="0.80" stroke-dasharray="2,1.5"/>
<polyline points="800.0,575.8 788.5,589.8 788.5,745.0" fill="none" stroke="#111" stroke-width="1.35"/>
<line x1="788.5" y1="560.2" x2="845.9" y2="560.2" stroke="#111" stroke-width="1.35"/>
<path d="M826,556.7 L832,560.2 L826,563.7 z" fill="#111"/>
<line x1="832.3" y1="556.5" x2="832.3" y2="564.0" stroke="#111" stroke-width="1.20"/>
<circle cx="845.9" cy="560.2" r="1.6" fill="#111"/>
<circle cx="845.9" cy="571.5" r="1.6" fill="#111"/>
<circle cx="834.8" cy="585.9" r="1.6" fill="#111"/>
<circle cx="846.0" cy="589.8" r="1.6" fill="#111"/>
<circle cx="857.6" cy="585.9" r="1.6" fill="#111"/>
<line x1="845.9" y1="571.5" x2="834.8" y2="585.9" stroke="#111" stroke-width="1.35"/>
<path d="M834.8,585.9 Q846,593 857.6,585.9" fill="none" stroke="#333" stroke-width="0.9" stroke-dasharray="2.5,2"/>
<polyline points="857.6,585.9 857.6,745.0 788.5,745.0" fill="none" stroke="#111" stroke-width="1.35"/>
<circle cx="857.6" cy="598.8" r="1.6" fill="#111"/>
<polyline points="857.6,598.8 903.0,598.8 903.0,589.8" fill="none" stroke="#111" stroke-width="1.35"/>
<circle cx="903.0" cy="571.5" r="1.6" fill="#111"/>
<circle cx="892.3" cy="585.9" r="1.6" fill="#111"/>
<circle cx="903.0" cy="589.8" r="1.6" fill="#111"/>
<circle cx="914.8" cy="585.9" r="1.6" fill="#111"/>
<line x1="903.0" y1="571.5" x2="892.3" y2="585.9" stroke="#111" stroke-width="1.35"/>
<line x1="892.3" y1="585.9" x2="903.0" y2="589.8" stroke="#444" stroke-width="0.80" stroke-dasharray="2,1.5"/>
<path d="M903,589.8 Q909,590 914.8,585.9" fill="none" stroke="#111" stroke-width="2"/>
<line x1="838.0" y1="578.2" x2="898.0" y2="578.2" stroke="#333" stroke-width="0.90" stroke-dasharray="3.5,2.5"/>
<text x="730.0" y="571.2" font-size="7.9" fill="#222" textLength="9.0" lengthAdjust="spacingAndGlyphs" font-family="Liberation Mono, monospace">ON</text>
<text x="752.0" y="573.5" font-size="7.9" fill="#222" textLength="12.0" lengthAdjust="spacingAndGlyphs" font-family="Liberation Mono, monospace">OFF</text>
<text x="776.0" y="571.2" font-size="7.9" fill="#222" textLength="9.0" lengthAdjust="spacingAndGlyphs" font-family="Liberation Mono, monospace">ON</text>
<text x="798.0" y="573.5" font-size="7.9" fill="#222" textLength="12.0" lengthAdjust="spacingAndGlyphs" font-family="Liberation Mono, monospace">OFF</text>
<text x="677.5" y="583.0" font-size="7.9" fill="#222" textLength="8.5" lengthAdjust="spacingAndGlyphs" font-family="Liberation Mono, monospace">LO</text>
<text x="710.0" y="583.0" font-size="7.9" fill="#222" textLength="7.8" lengthAdjust="spacingAndGlyphs" font-family="Liberation Mono, monospace">HI</text>
<text x="821.0" y="593.2" font-size="7.9" fill="#222" textLength="12.5" lengthAdjust="spacingAndGlyphs" font-family="Liberation Mono, monospace">OFF</text>
<text x="837.0" y="597.4" font-size="7.9" fill="#222" textLength="16.7" lengthAdjust="spacingAndGlyphs" font-family="Liberation Mono, monospace">TAIL</text>
<text x="860.0" y="586.2" font-size="7.9" fill="#222" textLength="17.0" lengthAdjust="spacingAndGlyphs" font-family="Liberation Mono, monospace">HEAD</text>
<text x="878.0" y="593.2" font-size="7.9" fill="#222" textLength="12.5" lengthAdjust="spacingAndGlyphs" font-family="Liberation Mono, monospace">OFF</text>
<text x="906.3" y="583.2" font-size="7.9" fill="#222" textLength="18.0" lengthAdjust="spacingAndGlyphs" font-family="Liberation Mono, monospace">HEAD</text>
<text x="905.0" y="597.4" font-size="7.9" fill="#222" textLength="17.0" lengthAdjust="spacingAndGlyphs" font-family="Liberation Mono, monospace">TAIL</text>
<path d="M784.5,611.3 l4,3.5 l4,-3.5 M784.5,608.8 l4,3.5 l4,-3.5" fill="none" stroke="#222" stroke-width="0.9"/>
<path d="M853.6,611.3 l4,3.5 l4,-3.5 M853.6,608.8 l4,3.5 l4,-3.5" fill="none" stroke="#222" stroke-width="0.9"/>
<text x="792.2" y="620.4" font-size="10.5" fill="#222" textLength="5.5" lengthAdjust="spacingAndGlyphs" font-family="Liberation Mono, monospace">6</text>
<text x="864.0" y="620.4" font-size="10.5" fill="#222" textLength="10.0" lengthAdjust="spacingAndGlyphs" font-family="Liberation Mono, monospace">14</text>
<circle cx="857.4" cy="687.8" r="1.6" fill="#111"/>
<circle cx="788.5" cy="745.0" r="1.6" fill="#111"/>
<line x1="788.5" y1="745.0" x2="788.5" y2="837.0" stroke="#111" stroke-width="1.35"/>
<path d="M786.3,841.5 v-2.8 a2.2,2.2 0 0 1 4.4,0 v2.8" fill="none" stroke="#222" stroke-width="0.9"/>
<line x1="784.0" y1="841.5" x2="793.0" y2="841.5" stroke="#333" stroke-width="0.90"/>
<line x1="785.2" y1="845.4" x2="792.0" y2="845.4" stroke="#333" stroke-width="0.90"/>
<line x1="786.0" y1="849.0" x2="791.0" y2="849.0" stroke="#aaa" stroke-width="0.90"/>
<rect x="782.5" y="854.2" width="12" height="11.5" fill="#111"/>
<text x="788.6" y="864.6" font-size="12.5" fill="#fff" font-weight="bold" text-anchor="middle" textLength="7.5" lengthAdjust="spacingAndGlyphs">5</text>
<text x="533.0" y="940.6" font-size="7.5" fill="#111" textLength="77.8" lengthAdjust="spacingAndGlyphs" font-weight="bold">KX35-AC-90816A-EC</text>
<text x="628.0" y="923.8" font-size="7.3" fill="#222" textLength="74.0" lengthAdjust="spacingAndGlyphs" font-family="Liberation Mono, monospace">Wire colour code</text>
<text x="628.0" y="930.4" font-size="7.3" fill="#222" textLength="30.0" lengthAdjust="spacingAndGlyphs" font-family="Liberation Mono, monospace">B:Black</text>
<text x="628.0" y="937.0" font-size="7.3" fill="#222" textLength="36.0" lengthAdjust="spacingAndGlyphs" font-family="Liberation Mono, monospace">BR:Brown</text>
<text x="680.8" y="930.4" font-size="7.3" fill="#222" textLength="64.5" lengthAdjust="spacingAndGlyphs" font-family="Liberation Mono, monospace">LG:Light green</text>
<text x="680.8" y="937.0" font-size="7.3" fill="#222" textLength="36.0" lengthAdjust="spacingAndGlyphs" font-family="Liberation Mono, monospace">O:Orange</text>
<text x="757.0" y="930.4" font-size="7.3" fill="#222" textLength="32.0" lengthAdjust="spacingAndGlyphs" font-family="Liberation Mono, monospace">G:Green</text>
<text x="757.0" y="937.0" font-size="7.3" fill="#222" textLength="32.0" lengthAdjust="spacingAndGlyphs" font-family="Liberation Mono, monospace">GR:Gray</text>
<text x="813.8" y="930.4" font-size="7.3" fill="#222" textLength="27.5" lengthAdjust="spacingAndGlyphs" font-family="Liberation Mono, monospace">L:Blue</text>
<text x="813.8" y="937.0" font-size="7.3" fill="#222" textLength="23.5" lengthAdjust="spacingAndGlyphs" font-family="Liberation Mono, monospace">R:Red</text>
<text x="866.0" y="930.4" font-size="7.3" fill="#222" textLength="32.0" lengthAdjust="spacingAndGlyphs" font-family="Liberation Mono, monospace">W:White</text>
<text x="866.0" y="937.0" font-size="7.3" fill="#222" textLength="27.0" lengthAdjust="spacingAndGlyphs" font-family="Liberation Mono, monospace">P:Pink</text>
<text x="912.5" y="930.4" font-size="7.3" fill="#222" textLength="37.0" lengthAdjust="spacingAndGlyphs" font-family="Liberation Mono, monospace">Y:Yellow</text>
<text x="912.5" y="937.0" font-size="7.3" fill="#222" textLength="36.5" lengthAdjust="spacingAndGlyphs" font-family="Liberation Mono, monospace">V:Violet</text>
<text x="970.8" y="930.4" font-size="7.3" fill="#222" textLength="50.5" lengthAdjust="spacingAndGlyphs" font-family="Liberation Mono, monospace">SB:Sky blue</text>
<text x="527.5" y="959.3" font-size="7.6" fill="#111" textLength="117.5" lengthAdjust="spacingAndGlyphs" font-weight="bold">&#169; Mitsubishi Motors Corporation</text>
<text x="653.5" y="959.3" font-size="7.6" fill="#111" textLength="33.0" lengthAdjust="spacingAndGlyphs" font-weight="bold">Jan. 1993</text>
<text x="776.0" y="959.3" font-size="7.6" fill="#111" textLength="41.5" lengthAdjust="spacingAndGlyphs" font-weight="bold">PHJE9026-A</text>
<text x="1036.0" y="959.3" font-size="7.6" fill="#111" textLength="24.5" lengthAdjust="spacingAndGlyphs" font-weight="bold">ADDED</text>
</svg>
  </div>
  <!-- main v scrollbar -->
  <div class="a sbv" style="left:1261px;top:0;width:19px;height:911px"></div>
  <div class="a sbtn" style="left:1262px;top:1px;width:17px;height:17px"><svg class="a" style="left:3px;top:5px" width="10" height="6"><path d="M1 5L5 1.5L9 5" stroke="#4a5a80" stroke-width="1.8" fill="none"/></svg></div>
  <div class="a sbtn" style="left:1262px;top:694px;width:17px;height:22px;background:linear-gradient(90deg,#c8d8fc,#b8cdfa)"><svg class="a" style="left:4px;top:7px" width="8" height="7"><path d="M0 0.5h7M0 2.5h7M0 4.5h7M0 6.5h7" stroke="#eef4ff"/></svg></div>
  <div class="a sbtn" style="left:1262px;top:893px;width:17px;height:17px"><svg class="a" style="left:3px;top:5px" width="10" height="6"><path d="M1 1L5 4.5L9 1" stroke="#4a5a80" stroke-width="1.8" fill="none"/></svg></div>
  <div class="a" style="left:0;top:0;width:1261px;height:6px;background:linear-gradient(rgba(0,0,0,0.33),rgba(0,0,0,0))"></div>
</div>
<div id="task" class="a">
  <div class="a" style="left:0;top:0;width:105px;height:30px;border-radius:0 6px 6px 0 / 0 16px 16px 0;background:linear-gradient(#2f8a2f 0px,#6ab86a 3px,#3f9e3f 9px,#45aa45 60%,#3a9a3a 100%);box-shadow:inset -3px 0 4px #1c6a1c"></div>
  <svg class="a" style="left:10px;top:8px" width="20" height="18" viewBox="0 0 20 18" transform="rotate(-8)"><path d="M2 3c3-1 5-1 7 0v6c-2-1-4-1-7 0z" fill="#f05a22"/><path d="M10 3c3 1 5 1 8 0v6c-3 1-5 1-8 0z" fill="#7ac043"/><path d="M1 10c3-1 5-1 8 0v6c-3-1-5-1-8 0z" fill="#3ba0e8"/><path d="M10 10c3 1 5 1 8 0v6c-3 1-5 1-8 0z" fill="#fcc314"/></svg>
  <div class="a" style="left:35px;top:6px;color:#fff;font-size:20px;font-weight:bold;font-style:italic;text-shadow:1px 1px 1px #1a4a1a;letter-spacing:0.5px">пуск</div>
  <div class="a tbtn" style="left:114px;width:155px"><svg class="a" style="left:10px;top:5px" width="16" height="16" viewBox="0 0 16 16"><circle cx="8" cy="8.5" r="5.5" fill="none" stroke="#3aa0f0" stroke-width="2.5"/><path d="M3 8.5h10" stroke="#3aa0f0" stroke-width="2"/><path d="M14 2C10 0 2 6 2 13" fill="none" stroke="#f0b020" stroke-width="1.4"/></svg><span class="a" style="left:30px;top:0;letter-spacing:0.75px">www.pajero4x4.r...</span></div>
  <div class="a tbtn" style="left:274px;width:158px"><svg class="a" style="left:10px;top:6px" width="17" height="14" viewBox="0 0 17 14"><path d="M1 2h5l1 1.5h9V13H1z" fill="#f8d868" stroke="#c89a30"/><path d="M1 5h15v8H1z" fill="#fce890"/></svg><span class="a" style="left:30px;top:0;letter-spacing:0.45px">Pajero II Electrical</span></div>
  <div class="a tbtn" style="left:434px;width:159px;background:linear-gradient(#1e52c8,#1a4ab8);box-shadow:inset 1px 1px 0 #103090"><svg class="a" style="left:10px;top:5px" width="14" height="16" viewBox="0 0 14 16"><path d="M2 1h8l3 3v11H2z" fill="#fff" stroke="#999" stroke-width="0.6"/><rect x="0" y="1" width="8" height="3" fill="#d40000"/><path d="M4 12c2-3 3-6 2.5-8 2 3 3 6 5.5 7-3 0-5 0-8 1z" fill="none" stroke="#e02020"/></svg><span class="a" style="left:30px;top:0">PHJE9026_A_B_C...</span></div>
  <div class="a" style="left:1144px;top:0;width:136px;height:30px;background:linear-gradient(#0e8ae8,#18a0f4 10%,#12a0f0 50%,#0c8ce4 90%,#0a6ac8);border-left:1px solid #0a5ac0"></div>
  <div class="a" style="left:1118px;top:8px;width:13px;height:16px;background:#3a6ad0"></div>
  <div class="a" style="left:1118px;top:9px;width:13px;overflow:hidden;color:#fff;font-size:12px;letter-spacing:-0.5px">RL</div>
  <svg class="a" style="left:1135px;top:6px" width="20" height="20" viewBox="0 0 20 20"><circle cx="9.7" cy="9.5" r="8.8" fill="#2a8af0" stroke="#8aa0c0" stroke-width="1"/><circle cx="8" cy="7" r="5" fill="#6ac0ff" opacity="0.5"/><path d="M11.5 5.5L7 10l4.5 4.5" stroke="#fff" stroke-width="2.2" fill="none"/></svg>
  <svg class="a" style="left:1155px;top:6px" width="17" height="17"><rect x="0" y="12" width="3" height="5" fill="#20c020"/><rect x="3" y="9" width="3" height="8" fill="#20c020"/><rect x="7" y="5" width="3" height="12" fill="#fff"/><rect x="11" y="1" width="3" height="16" fill="#fff"/></svg>
  <svg class="a" style="left:1173px;top:6px" width="18" height="17"><rect x="1" y="5" width="9" height="7" fill="#c8e4fc" stroke="#5a8ab8"/><rect x="2" y="13" width="8" height="3" fill="#d0d8e0"/><path d="M12 3a4 4 0 0 1 0 7M14 1a7 7 0 0 1 0 11" stroke="#7ce040" fill="none" stroke-width="1.2"/></svg>
  <svg class="a" style="left:1191px;top:5px" width="18" height="19"><path d="M1 10h16l-2 8H3z" fill="#f0a020"/><rect x="8" y="1" width="2" height="10" fill="#e08010"/><path d="M10 1h6v4h-6z" fill="#f0a020"/><rect x="8.3" y="11" width="1.5" height="4" fill="#fff"/></svg>
  <svg class="a" style="left:1211px;top:5px" width="16" height="19" viewBox="0 0 16 19"><path d="M8 1l7 3v6c0 5-4 7-7 8-3-1-7-3-7-8V4z" fill="#d82020" stroke="#a0a0b0"/><path d="M5 7l6 6M11 7l-6 6" stroke="#fff" stroke-width="2"/></svg>
  <div class="a" style="left:1234px;top:8px;color:#fff;font-size:12px;letter-spacing:0.3px">20:51</div>
</div>
</body></html>
